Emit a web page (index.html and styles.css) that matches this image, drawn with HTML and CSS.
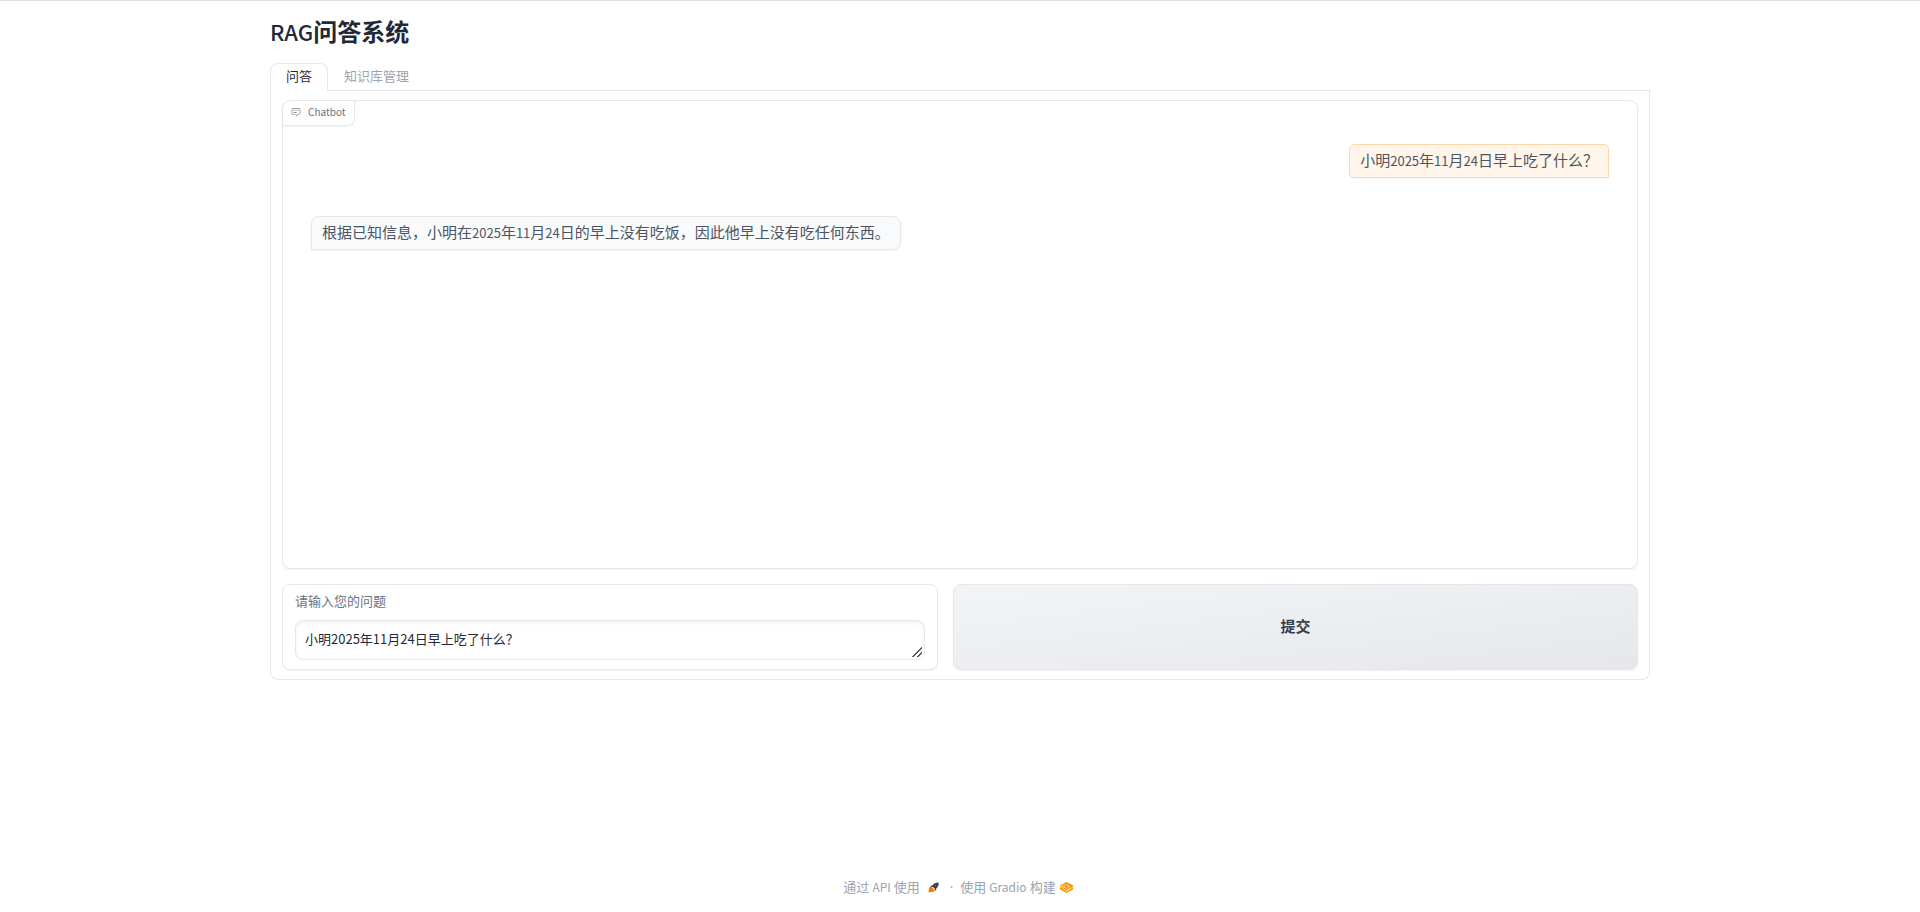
FILE: index.html
```html
<!DOCTYPE html>
<html lang="zh-CN">
<head>
<meta charset="utf-8">
<meta name="viewport" content="width=device-width, initial-scale=1">
<title>RAG问答系统</title>
<link rel="stylesheet" href="styles.css">
</head>
<body>
<div class="app">
  <main class="main">
    <h1 class="title"><span class="title-latin">RAG</span>问答系统</h1>
    <div class="tabs" role="tablist">
      <button class="tab tab-active" id="tab-qa" role="tab" aria-selected="true" aria-controls="panel-qa">问答</button>
      <button class="tab" role="tab" aria-selected="false">知识库管理</button>
    </div>
    <section class="panel" id="panel-qa" role="tabpanel" aria-labelledby="tab-qa">
      <div class="block chatbot">
        <div class="chat-label">
          <svg class="chat-icon" viewBox="0 0 32 32" aria-hidden="true"><path fill="currentColor" d="M17.74 30 16 29l4-7h6a2 2 0 0 0 2-2V8a2 2 0 0 0-2-2H6a2 2 0 0 0-2 2v12a2 2 0 0 0 2 2h9v2H6a4 4 0 0 1-4-4V8a4 4 0 0 1 4-4h20a4 4 0 0 1 4 4v12a4 4 0 0 1-4 4h-4.84Z"/><path fill="currentColor" d="M8 10h16v2H8zm0 6h10v2H8z"/></svg>
          <span>Chatbot</span>
        </div>
        <div class="messages">
          <p class="message message-user">小明<span class="num">2025</span>年<span class="num">11</span>月<span class="num">24</span>日早上吃了什么？</p>
          <p class="message message-bot">根据已知信息，小明在<span class="num">2025</span>年<span class="num">11</span>月<span class="num">24</span>日的早上没有吃饭，因此他早上没有吃任何东西。</p>
        </div>
      </div>
      <div class="row">
        <div class="block field">
          <label class="field-label" for="question">请输入您的问题</label>
          <textarea class="field-input" id="question" rows="1">小明2025年11月24日早上吃了什么？</textarea>
        </div>
        <button class="submit" type="button">提交</button>
      </div>
    </section>
  </main>
  <footer class="footer">
    <button class="footer-link" type="button">通过 <span class="footer-latin">API</span> 使用
      <svg class="rocket" viewBox="0 0 24 24" aria-hidden="true"><path fill="#374151" d="M23 1c-7 0-10 2-13 6l-3 1-2 3 6 0 4 4 0 4 3-2 0-3c4-3 6-7 5-13Z"/><circle cx="17" cy="7" r="1.200" fill="#9ca3af"/><path fill="#ff7c00" d="m7 10 8 8c0 3-4 4-8 4l-6 1 1-7c0-3 1-6 5-6Z"/></svg>
    </button>
    <span class="dot">·</span>
    <a class="footer-link" href="#">使用 <span class="footer-latin">Gradio</span> 构建
      <svg class="gradio" viewBox="0 0 26 22" aria-hidden="true"><path fill="#ff8c00" d="M13 0 26 7v3l-2 1 2 1v3l-13 7L0 15v-3l2-1-2-1V7Z"/><path fill="#ffc61e" d="m0 7 5-3 3 2-4 2 4 3-3 2-5-3Zm26 5-3-2-10 6v3l13-7Z"/><path fill="none" stroke="#fff3d0" stroke-width="1.800" d="m7 9 6-4 6 4-6 4Zm-2 4 8 5 8-5"/></svg>
    </a>
  </footer>
</div>
</body>
</html>
```
FILE: styles.css
```css
* {
  box-sizing: border-box;
}

body {
  margin: 0;
  background: #fff;
  color: #1f2937;
  font: 13px/20px "Noto Sans CJK SC", sans-serif;
}

button,
textarea {
  font: inherit;
}

.app {
  display: flex;
  flex-direction: column;
  min-height: 100vh;
  border-top: 1px solid #e0e0e0;
}

.main {
  width: 100%;
  max-width: 1380px;
  margin: 0 auto;
  padding-top: 13px;
}

.title {
  margin: 0 0 15px;
  font-size: 24px;
  line-height: 34px;
  font-weight: 700;
}

.title-latin {
  font-size: 22px;
  font-weight: 500;
}

.tabs {
  display: flex;
  border-bottom: 1px solid #e5e7eb;
}

.tab {
  height: 28px;
  margin-bottom: -1px;
  padding: 0 15px 4px;
  border: 1px solid transparent;
  border-bottom: 0;
  border-radius: 8px 8px 0 0;
  background: transparent;
  color: #9ca3af;
}

.tab-active {
  border-color: #e5e7eb;
  background: #fff;
  color: #1f2937;
}

.panel {
  display: flex;
  flex-direction: column;
  gap: 15px;
  padding: 9px 11px;
  border: 1px solid #e5e7eb;
  border-top: 0;
  border-radius: 0 0 8px 8px;
}

.block {
  border: 1px solid #e5e7eb;
  border-radius: 8px;
  background: #fff;
  box-shadow: 0 1px 2px rgba(0, 0, 0, 0.05);
}

.chatbot {
  display: flex;
  flex-direction: column;
  min-height: 469px;
}

.chat-label {
  display: flex;
  align-self: flex-start;
  align-items: center;
  gap: 7px;
  height: 25px;
  padding: 0 8px 2px;
  border: solid #e5e7eb;
  border-width: 0 1px 1px 0;
  border-radius: 8px 0 8px 0;
  box-shadow: 0 1px 2px rgba(0, 0, 0, 0.05);
  color: #6b7280;
  font-size: 10px;
}

.chat-icon {
  width: 10px;
  height: 10px;
}

.messages {
  display: flex;
  flex-direction: column;
  gap: 38px;
  padding: 18px 28px;
}

.message {
  margin: 0;
  padding: 4px 10px 6px;
  border: 1px solid;
  border-radius: 8px;
  box-shadow: 0 1px 2px rgba(0, 0, 0, 0.05);
  color: #4b5563;
  font-size: 15px;
  line-height: 22px;
}

.message-user {
  align-self: flex-end;
  border-color: #fed7aa;
  border-radius: 5px 5px 0 5px;
  background: #fff5eb;
}

.message-bot {
  align-self: flex-start;
  border-color: #e5e7eb;
  border-bottom-left-radius: 0;
  background: #f9fafb;
}

.num {
  font-size: 13px;
  line-height: 1;
}

.row {
  display: grid;
  grid-template-columns: 656fr 685fr;
  gap: 15px;
}

.field {
  display: flex;
  flex-direction: column;
  gap: 9px;
  padding: 6px 12px 9px;
}

.field-label {
  color: #6b7280;
}

.field-input {
  display: block;
  width: 100%;
  height: 40px;
  padding: 8px 9px;
  border: 1px solid #e5e7eb;
  border-radius: 8px;
  box-shadow: inset 0 2px 4px rgba(0, 0, 0, 0.06);
  color: #1f2937;
  overflow: hidden;
  resize: vertical;
}

.field-input::-webkit-resizer {
  background: linear-gradient(135deg, transparent 48%, #555 48%, #555 57%, transparent 57%, transparent 70%, #555 70%, #555 80%, transparent 80%) 3px 3px / 10px 10px no-repeat;
}

.submit {
  padding: 0 0 2px;
  border: 1px solid #e5e7eb;
  border-radius: 8px;
  background: linear-gradient(to bottom right, #f3f4f6, #e5e7eb);
  box-shadow: 0 1px 2px rgba(0, 0, 0, 0.05);
  color: #374151;
  font-size: 15px;
  font-weight: 600;
}

.footer {
  display: flex;
  justify-content: center;
  align-items: center;
  margin-top: auto;
  padding: 13px 4px 15px 0;
  color: #9ca3af;
}

.footer-link {
  display: flex;
  align-items: center;
  gap: 3px;
  padding: 0;
  border: 0;
  background: none;
  color: inherit;
  text-decoration: none;
}

.footer-latin {
  font-size: 12px;
}

.dot {
  margin: 0 7px 0 11px;
  font-family: "Open Sans", sans-serif;
}

.rocket {
  width: 11px;
  height: 11px;
  margin-left: 5px;
}

.gradio {
  width: 13px;
  height: 11px;
  margin-left: 1px;
}
```
